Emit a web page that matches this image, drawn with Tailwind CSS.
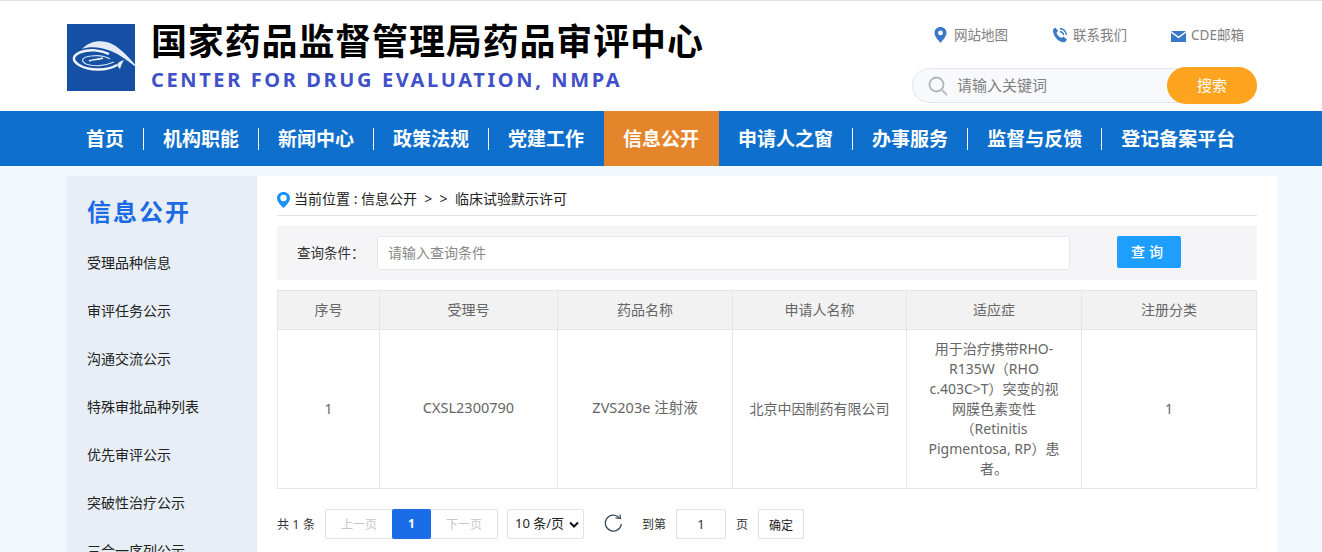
<!DOCTYPE html>
<html lang="zh-CN">
<head>
  <meta charset="UTF-8">
  <title>国家药品监督管理局药品审评中心</title>
  <meta name="viewport" content="width=device-width, initial-scale=1" />
  <script src="https://cdn.jsdelivr.net/npm/@tailwindcss/browser@4"></script>
</head>
<body class="h-[552px] overflow-hidden bg-[#f3f7fe] font-['Noto_Sans','Noto_Sans_CJK_SC',sans-serif] text-[13px] text-[#333]">

  <!-- Header -->
  <header class="h-[111px] bg-white border-t border-[#e2e2e2]">
    <div class="w-[1190px] ml-[67px] flex justify-between">
      <div class="flex pt-[23px]">
        <svg class="w-[68px] h-[67px] overflow-visible" viewBox="0 0 68 67">
          <rect width="68" height="67" fill="#1550a5"/>
          <path d="M15 25C22 17 35 15 45 20C55 25 63 35 73 46C62 38 54 31 44 27C34 23 23 22 15 25Z" fill="#e4ebf6"/>
          <path d="M50 41C40 47 22 47 12 41C4 36 6 31 14 28C22 25 34 26 42 30" fill="none" stroke="#f2f5fa" stroke-width="2.500"/>
          <path d="M47 38C38 42 26 43 19 40C13 37 15 33 24 32C31 31 38 32 43 35" fill="none" stroke="#d5e0f0" stroke-width="1.200"/>
          <path d="M22 37C26 35 31 36 36 34" fill="none" stroke="#f2f5fa" stroke-width="1.400"/>
          <path d="M50 41C51 38 54 37 57 36C55 39 54 42 53 45C52 44 51 43 50 41Z" fill="#e4ebf6"/>
        </svg>
        <div class="ml-[16px]">
          <div class="text-[36px] leading-[38px] font-bold text-black tracking-[0.85px] -mt-[1px]">国家药品监督管理局药品审评中心</div>
          <div class="text-[20px] leading-[24px] mt-[7px] font-bold text-[#3f50c8] tracking-[2.62px]">CENTER FOR DRUG EVALUATION, NMPA</div>
        </div>
      </div>
      <div class="w-[345px]">
        <div class="flex items-center h-[67px] text-[13.5px] leading-[18px] text-[#808080]">
          <div class="flex items-center ml-[22px] w-[118px]">
            <svg class="w-[13px] h-[16px] mr-[7px]" viewBox="0 0 13 16"><path fill-rule="evenodd" d="M6.5 0C3 0 .5 2.6.5 5.8.5 9.5 4 13 6.5 16 9 13 12.500 9.500 12.500 5.800 12.500 2.600 10 0 6.500 0ZM6.500 3.500A2.400 2.400 0 1 1 6.500 8.300 2.400 2.400 0 0 1 6.500 3.500Z" fill="#3a78c9"/></svg>
            网站地图
          </div>
          <div class="flex items-center w-[119px]">
            <svg class="w-[16px] h-[16px] mr-[5px]" viewBox="0 0 16 16"><path d="M1 2.500 3.500.5 6 4 4.500 5.800C5 7.800 7 10 9.500 11L11.200 9.500 15 12.500 12.800 15.300C7 16 .5 9 1 2.500Z" fill="#3a78c9"/><path d="M8 1.500C11.500 2 14 4.500 14.500 8M8 4.500C10 4.800 11.300 6 11.800 8" fill="none" stroke="#3a78c9" stroke-width="1.300"/></svg>
            联系我们
          </div>
          <div class="flex items-center">
            <svg class="w-[15px] h-[11px] mr-[5px] mt-[3px]" viewBox="0 0 15 11"><path d="M0 0H15L7.500 5.500Z M0 1.800 7.500 7.300 15 1.800V11H0Z" fill="#3a78c9"/></svg>
            CDE邮箱
          </div>
        </div>
        <div class="relative h-[35px] w-[345px] rounded-full border border-[#e3e5ea] bg-[#f8f9fd] flex items-center pl-[15px] text-[15px] text-[#808080]">
          <svg class="w-[20px] h-[20px] mr-[9px]" viewBox="0 0 20 20"><circle cx="8.500" cy="8.500" r="7" fill="none" stroke="#b5b5b5" stroke-width="1.800"/><path d="M14 14 19 19" stroke="#bdbdbd" stroke-width="2"/></svg>
          请输入关键词
          <div class="absolute right-[-1px] top-[-2px] w-[90px] h-[37px] rounded-full bg-[#ffa41f] text-white text-[15px] flex items-center justify-center">搜索</div>
        </div>
      </div>
    </div>
  </header>

  <!-- Nav -->
  <nav class="h-[55px] bg-[#0e6fcd]">
    <ul class="ml-[67px] flex h-full text-[19px] font-bold text-white whitespace-nowrap">
      <li class="flex items-center pl-[19px]"><span class="pt-[1px]">首页</span><i class="ml-[19px] h-[22px] border-l border-white"></i></li>
      <li class="flex items-center pl-[19px]"><span class="pt-[1px]">机构职能</span><i class="ml-[19px] h-[22px] border-l border-white"></i></li>
      <li class="flex items-center pl-[19px]"><span class="pt-[1px]">新闻中心</span><i class="ml-[19px] h-[22px] border-l border-white"></i></li>
      <li class="flex items-center pl-[19px]"><span class="pt-[1px]">政策法规</span><i class="ml-[19px] h-[22px] border-l border-white"></i></li>
      <li class="flex items-center pl-[19px] pr-[20px]"><span class="pt-[1px]">党建工作</span></li>
      <li class="flex items-center pl-[19px] pr-[20px] bg-[#e5852b]"><span class="pt-[1px]">信息公开</span></li>
      <li class="flex items-center pl-[19px]"><span class="pt-[1px]">申请人之窗</span><i class="ml-[19px] h-[22px] border-l border-white"></i></li>
      <li class="flex items-center pl-[19px]"><span class="pt-[1px]">办事服务</span><i class="ml-[19px] h-[22px] border-l border-white"></i></li>
      <li class="flex items-center pl-[19px]"><span class="pt-[1px]">监督与反馈</span><i class="ml-[19px] h-[22px] border-l border-white"></i></li>
      <li class="flex items-center pl-[19px]"><span class="pt-[1px]">登记备案平台</span></li>
    </ul>
  </nav>

  <!-- Content -->
  <div class="mt-[10px] ml-[67px] w-[1210px] flex">
    <aside class="w-[190px] h-[400px] bg-[#e8eef6] pl-[20px] text-[14px] text-[#222]">
      <h2 class="pt-[18px] text-[24px] leading-[36px] font-bold text-[#1c6ae4] tracking-[2px]">信息公开</h2>
      <ul class="mt-[9px] leading-[48px]">
        <li>受理品种信息</li>
        <li>审评任务公示</li>
        <li>沟通交流公示</li>
        <li>特殊审批品种列表</li>
        <li>优先审评公示</li>
        <li>突破性治疗公示</li>
        <li>三合一序列公示</li>
      </ul>
    </aside>

    <main class="w-[1020px] h-[400px] bg-white px-[20px]">
      <div class="h-[40px] border-b border-[#e3e3e3] flex items-center text-[14px] text-[#222]">
        <svg class="w-[13px] h-[16px] mr-[4px] mt-[8px]" viewBox="0 0 13 16"><path fill-rule="evenodd" d="M6.500 0C3 0 0 2.600 0 6 0 10 4 13.500 6.500 16 9 13.500 13 10 13 6 13 2.600 10 0 6.500 0ZM6.500 2.800A3.200 3.200 0 1 1 6.500 9.200 3.200 3.200 0 0 1 6.500 2.800Z" fill="#1a91ff"/></svg>
        <span class="mt-[5px]">当前位置 : 信息公开&nbsp; &gt; &nbsp;&gt;&nbsp; 临床试验默示许可</span>
      </div>
      <div class="relative mt-[10px] h-[54px] bg-[#f5f5f8] flex items-center pl-[20px] text-[13.5px] text-[#333]">
        <span class="w-[80px]">查询条件：</span>
        <div class="w-[693px] h-[34px] -mt-[1px] bg-white border border-[#e4e7ed] rounded-[3px] flex items-center pl-[10px] text-[14px] text-[#888]">请输入查询条件</div>
        <div class="ml-[47px] w-[64px] h-[32px] -mt-[2px] bg-[#1e9fff] rounded-[2px] text-white text-[14px] font-medium text-center leading-[32px] tracking-[4px]">查询</div>
      </div>

      <table class="mt-[10px] w-[979px] table-fixed border-collapse text-[14px] text-[#666] text-center">
        <colgroup>
          <col class="w-[102px]"><col class="w-[178px]"><col class="w-[175px]"><col class="w-[174px]"><col class="w-[175px]"><col class="w-[175px]">
        </colgroup>
        <thead class="bg-[#f2f2f2]">
          <tr class="h-[39px]">
            <th class="border border-[#e6e6e6] font-normal pb-[2px]">序号</th>
            <th class="border border-[#e6e6e6] font-normal pb-[2px]">受理号</th>
            <th class="border border-[#e6e6e6] font-normal pb-[2px]">药品名称</th>
            <th class="border border-[#e6e6e6] font-normal pb-[2px]">申请人名称</th>
            <th class="border border-[#e6e6e6] font-normal pb-[2px]">适应症</th>
            <th class="border border-[#e6e6e6] font-normal pb-[2px]">注册分类</th>
          </tr>
        </thead>
        <tbody>
          <tr class="h-[159px]">
            <td class="border border-[#e6e6e6] pb-[2px]">1</td>
            <td class="border border-[#e6e6e6] pb-[2px] text-[14.500px]">CXSL2300790</td>
            <td class="border border-[#e6e6e6] pb-[2px] text-[14.500px]">ZVS203e 注射液</td>
            <td class="border border-[#e6e6e6] pb-[2px]">北京中因制药有限公司</td>
            <td class="border border-[#e6e6e6] px-[20px] leading-[20px]">用于治疗携带RHO-R135W（RHO c.403C&gt;T）突变的视网膜色素变性（Retinitis Pigmentosa, RP）患者。</td>
            <td class="border border-[#e6e6e6] pb-[2px]">1</td>
          </tr>
        </tbody>
      </table>

      <div class="mt-[20px] flex items-center h-[30px] text-[12px] text-[#333]">
        <span class="w-[48px] pt-[2px] tracking-[0.2px]">共 1 条</span>
        <div class="flex h-[30px] border border-[#e2e2e2] rounded-[2px] text-[#c8c8c8] leading-[30px] text-center">
          <span class="w-[66px]">上一页</span>
          <span class="w-[39px] -my-px h-[30px] bg-[#1a6ce6] text-white font-bold rounded-[2px]">1</span>
          <span class="w-[66px]">下一页</span>
        </div>
        <div class="ml-[9px] w-[77px] h-[30px] border border-[#e2e2e2] rounded-[2px] flex items-center pl-[7px] text-[#222] text-[13px]">
          10 条/页
          <svg class="w-[10px] h-[7px] ml-[5px]" viewBox="0 0 10 7"><path d="M1 1.500 5 5.500 9 1.500" fill="none" stroke="#111" stroke-width="2"/></svg>
        </div>
        <svg class="ml-[20px] -mt-[2px] w-[19px] h-[19px]" viewBox="0 0 19 19"><path d="M15 3.500A8 8 0 1 0 17.300 10" fill="none" stroke="#3d4e63" stroke-width="1.300"/><path d="M11.500 3.800 16.500 4.500 16 .5" fill="none" stroke="#3d4e63" stroke-width="1.300"/></svg>
        <span class="ml-[19px] w-[34px] pt-[2px]">到第</span>
        <div class="w-[50px] h-[30px] border border-[#e2e2e2] rounded-[2px] text-center leading-[28px] text-[13px]">1</div>
        <span class="ml-[10px] w-[22px] pt-[2px]">页</span>
        <div class="w-[46px] h-[30px] border border-[#e2e2e2] rounded-[2px] text-center leading-[32px] text-[#222]">确定</div>
      </div>
    </main>
  </div>
</body>
</html>
